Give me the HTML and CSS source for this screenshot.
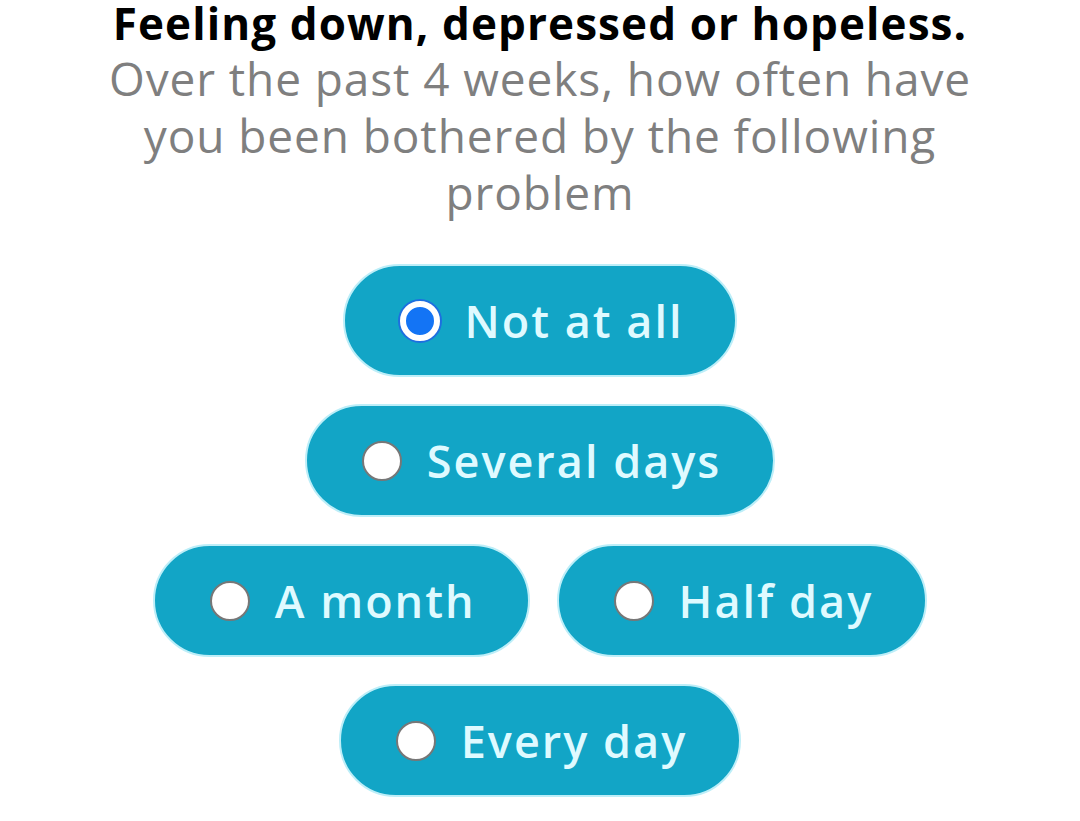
FILE: index.html
```html
<!DOCTYPE html>
<html>
<head>
<meta charset="utf-8">
<link rel="stylesheet" href="styles.css">
</head>
<body>
<div class="page">
  <h1 class="title">Feeling down, depressed or hopeless.</h1>
  <p class="subtitle">Over the past 4 weeks, how often have you been bothered by the following problem</p>
  <div class="options">
    <div class="row">
      <button class="opt selected"><span class="radio"></span><span class="label">Not at all</span></button>
    </div>
    <div class="row">
      <button class="opt"><span class="radio"></span><span class="label">Several days</span></button>
    </div>
    <div class="row">
      <button class="opt"><span class="radio"></span><span class="label">A month</span></button>
      <button class="opt"><span class="radio"></span><span class="label">Half day</span></button>
    </div>
    <div class="row">
      <button class="opt"><span class="radio"></span><span class="label">Every day</span></button>
    </div>
  </div>
</div>
</body>
</html>
```
FILE: styles.css
```css
html, body {
  margin: 0;
  padding: 0;
  background: #ffffff;
}
.page {
  width: 1080px;
  display: flex;
  flex-direction: column;
  align-items: center;
  font-family: "Open Sans", "Noto Sans", sans-serif;
}
.title {
  margin: 0;
  font-size: 44px;
  font-weight: 700;
  line-height: 46px;
  letter-spacing: 1.1px;
  color: #000;
  text-align: center;
}
.subtitle {
  margin: 4px 0 0;
  width: 880px;
  font-size: 46px;
  font-weight: 400;
  line-height: 57px;
  letter-spacing: 0.9px;
  color: #7f7f7f;
  text-align: center;
}
.options {
  margin-top: 43px;
  display: flex;
  flex-direction: column;
  align-items: center;
  gap: 27px;
}
.row {
  display: flex;
  gap: 27px;
  justify-content: center;
}
.opt {
  height: 113px;
  box-sizing: border-box;
  padding: 0 52px 0 55px;
  border: 2px solid #bdeef8;
  border-radius: 57px;
  background: #12a5c6;
  display: flex;
  align-items: center;
  gap: 25px;
  font-family: inherit;
  cursor: pointer;
}
.radio {
  width: 40px;
  height: 40px;
  box-sizing: border-box;
  border-radius: 50%;
  background: #ffffff;
  border: 2px solid #777;
  flex: none;
}
.selected .radio {
  border: 6px solid #ffffff;
  background: #1374f5;
  box-shadow: 0 0 0 2px #1d6fe0;
}
.label {
  font-size: 45px;
  font-weight: 600;
  letter-spacing: 2px;
  color: #dffaff;
}
```
